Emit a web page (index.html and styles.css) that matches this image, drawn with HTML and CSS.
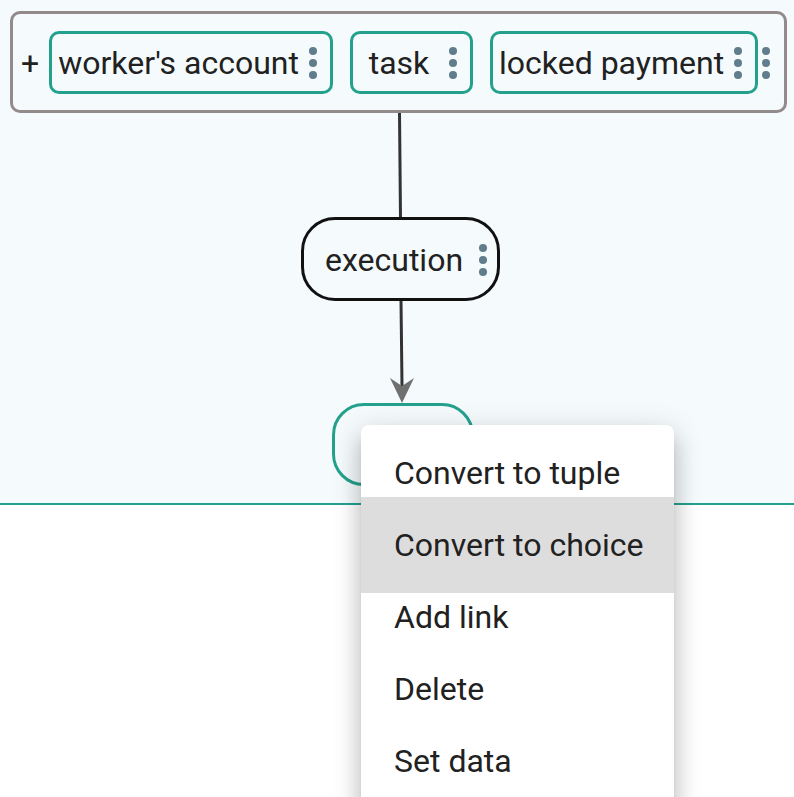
FILE: index.html
```html
<!DOCTYPE html>
<html lang="en">
<head>
    <meta charset="UTF-8">
    <meta name="viewport" content="width=device-width, initial-scale=1.0">
    <title>Diagram editor</title>
    <link rel="stylesheet" href="styles.css">
</head>
<body>

    <!-- Diagram canvas -->
    <div class="canvas">
        <svg class="edges" width="794" height="503" viewBox="0 0 794 503">
            <line x1="399.5" y1="113" x2="400.5" y2="218" stroke="#333" stroke-width="3"/>
            <line x1="401" y1="300" x2="402" y2="386" stroke="#333" stroke-width="3"/>
            <polygon points="390,378 402,403 414,378 402,386" fill="#707070"/>
        </svg>

        <div class="node record">
            <span class="plus">+</span>
            <div class="pill">
                <span class="label">worker's account</span>
                <svg class="dots" width="8" height="32" viewBox="0 0 8 32"><circle cx="4" cy="4" r="4"/><circle cx="4" cy="16" r="4"/><circle cx="4" cy="28" r="4"/></svg>
            </div>
            <div class="pill">
                <span class="label">task</span>
                <svg class="dots" width="8" height="32" viewBox="0 0 8 32"><circle cx="4" cy="4" r="4"/><circle cx="4" cy="16" r="4"/><circle cx="4" cy="28" r="4"/></svg>
            </div>
            <div class="pill">
                <span class="label">locked payment</span>
                <svg class="dots" width="8" height="32" viewBox="0 0 8 32"><circle cx="4" cy="4" r="4"/><circle cx="4" cy="16" r="4"/><circle cx="4" cy="28" r="4"/></svg>
            </div>
            <svg class="dots record-dots" width="8" height="32" viewBox="0 0 8 32"><circle cx="4" cy="4" r="4"/><circle cx="4" cy="16" r="4"/><circle cx="4" cy="28" r="4"/></svg>
        </div>

        <div class="node execution">
            <span class="label">execution</span>
            <svg class="dots" width="8" height="32" viewBox="0 0 8 32"><circle cx="4" cy="4" r="4"/><circle cx="4" cy="16" r="4"/><circle cx="4" cy="28" r="4"/></svg>
        </div>

        <div class="node empty"></div>
    </div>

    <!-- Context menu -->
    <ul class="menu">
        <li class="menu-item">Convert to tuple</li>
        <li class="menu-item active">Convert to choice</li>
        <li class="menu-item">Add link</li>
        <li class="menu-item">Delete</li>
        <li class="menu-item">Set data</li>
    </ul>

</body>
</html>
```

FILE: styles.css
```css
* {
    margin: 0;
    padding: 0;
    box-sizing: border-box;
}

body {
    font-family: Roboto, 'Liberation Sans', sans-serif;
    font-size: 32px;
    color: #212121;
    background-color: #fff;
    width: 794px;
    height: 797px;
    overflow: hidden;
    position: relative;
}

/* Canvas */
.canvas {
    position: relative;
    height: 505px;
    background-color: #f5fafd;
    border-bottom: 2px solid #24a18d;
}

.edges {
    position: absolute;
    left: 0;
    top: 0;
}

.node {
    position: absolute;
    display: flex;
    align-items: center;
}

.dots {
    fill: #607d8b;
    flex-shrink: 0;
    margin-top: 2px;
}

.label {
    min-width: 80px;
    padding-top: 2px;
    text-align: center;
    white-space: nowrap;
}

/* Record node with fields */
.record {
    left: 10px;
    top: 11px;
    width: 777px;
    height: 102px;
    border: 3px solid #938b8b;
    border-radius: 10px;
    padding-left: 8px;
}

.plus {
    margin-right: 10px;
    padding-top: 2px;
}

.pill {
    display: flex;
    align-items: center;
    height: 63px;
    margin-right: 17px;
    padding: 0 13px 0 6px;
    border: 3px solid #24a18d;
    border-radius: 10px;
}

.pill .dots {
    margin-left: 10px;
}

.pill:nth-of-type(3) {
    margin-right: 4px;
}

/* Execution node */
.execution {
    left: 301px;
    top: 217px;
    width: 199px;
    height: 84px;
    padding-left: 21px;
    border: 3px solid #111;
    border-radius: 34px;
    background-color: #f5fafd;
}

.execution .dots {
    margin-left: 16px;
}

.empty {
    left: 332px;
    top: 403px;
    width: 142px;
    height: 83px;
    border: 3px solid #24a18d;
    border-radius: 32px;
}

/* Context menu */
.menu {
    position: absolute;
    left: 361px;
    top: 425px;
    width: 313px;
    list-style: none;
    padding: 12px 0 16px;
    background-color: #fff;
    border-radius: 8px;
    box-shadow: 0 10px 10px -6px rgba(0, 0, 0, 0.2),
                0 16px 20px 2px rgba(0, 0, 0, 0.14),
                0 6px 28px 4px rgba(0, 0, 0, 0.12);
}

.menu-item {
    position: relative;
    height: 72px;
    line-height: 72px;
    padding-left: 33px;
    white-space: nowrap;
}

.menu-item.active {
    height: 96px;
    margin: -12px 0;
    padding-top: 12px;
    background-color: #dddddd;
}
```
